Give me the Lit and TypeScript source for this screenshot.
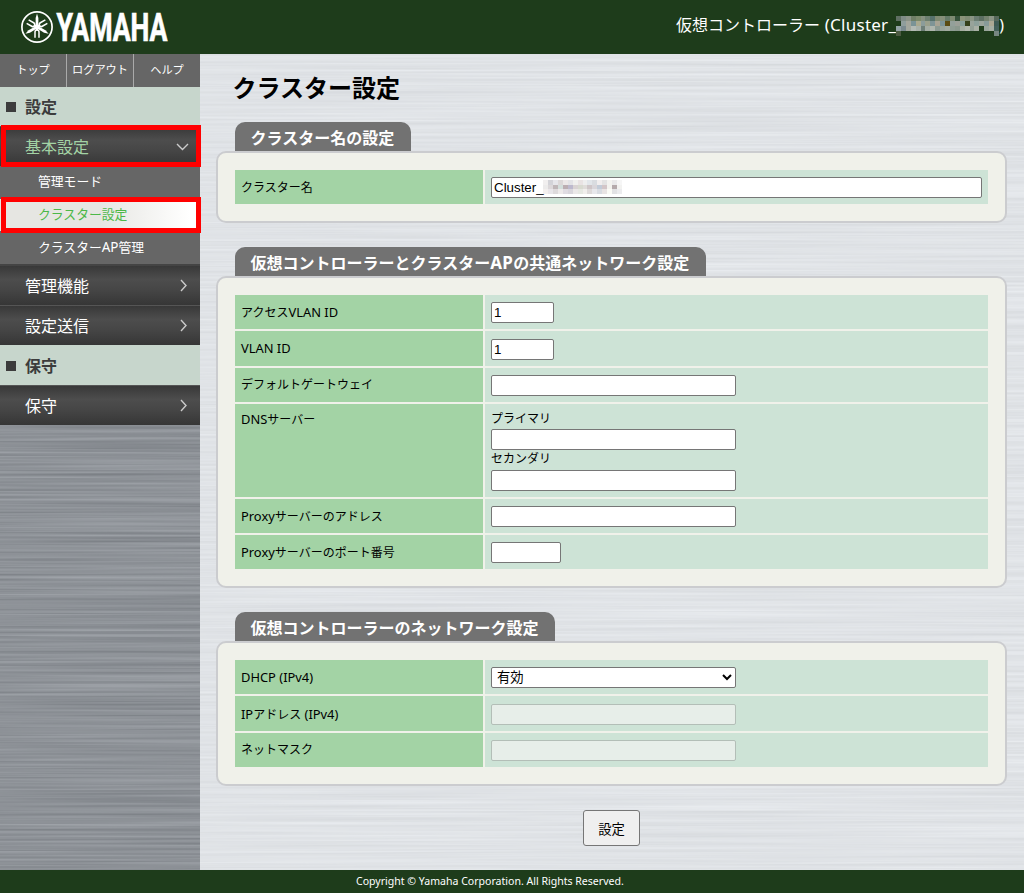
import { LitElement, html, css, svg } from "lit";
import { customElement, property } from "lit/decorators.js";

const HEADER_MOSAIC = [
  "5f6f63 7f8c86 8b9488 6f7f66 7b8a6c 85907f 6c7f70 56716b 7f8a72 858f7a 657a68 7d8a72 35513a 8a9379 7f8b74 8a9585 6b7d72 5c6f62 74826f 8b9485 56685a",
  "1e3c1b 8f9e9c a3a69c 7a9396 a9a98f 8b9c9a 9aa08c 7e9496 a7a394 7d9597 5b4c12 93a09a 9ba098 8aa09a 35401a 98a39a 8da09a 9aa49b 879a98 aca894 3f5b55",
  "93a3a5 7a8a8f a3a89e b3bab4 a7b0a8 6e7f78 a4ada4 afb6ae 8c9a92 9aa59b a2aba0 8f9d94 8b998e a6aea2 b2b8ad 93a096 a9b0a5 1e3c1b 9aa69c a6aea3 43605a",
  "4b5a42 1e3c1b 1e3c1b 1e3c1b 1e3c1b 1e3c1b 1e3c1b 1e3c1b 1e3c1b 1e3c1b 1e3c1b 1e3c1b 1e3c1b 1e3c1b 1e3c1b 1e3c1b 1e3c1b 1e3c1b 1e3c1b 1e3c1b 768680",
];
const FIELD_MOSAIC = [
  "f1efef d3d3d8 e6e6ea dcd8d8 ece8e8 e3e3e6 f0f0ee e9e3e3 eeeeee e2e6ea d9dce0 f1eeee e3e3e3 f3f3f0 e9e9ea f6f6f6",
  "ecebeb dcd8da bfb6b8 d3dedb bcaeb2 bdb9cd d9d3d3 d8dad0 dfdcd9 cfc6c8 d9d6da c3ccd8 d3c6c8 f3f3ef b5aaac f2f2f0",
  "f3efee e9e6ea dedadc eeeaea e0dce2 d9d6dc ebe8e8 e6e8e2 f1eeec dedada e8e8ec d9dce2 e9e4e4 fbfbf6 e2e2e4 ececee",
];

const mosaic = (rows: string[], w: number, h: number) => html`
  <svg width=${w} height=${h} viewBox="0 0 ${rows[0].split(" ").length} ${rows.length}" preserveAspectRatio="none" shape-rendering="crispEdges">
    ${rows.map((r, y) => r.split(" ").map((c, x) => svg`<rect x=${x} y=${y} width="1" height="1" fill=${"#" + c}></rect>`))}
  </svg>`;

// Latin runs are set slightly larger than the kana and kanji around them.
const mixed = (text: string) =>
  text.split(/([A-Za-z( ][A-Za-z0-9() ]*)/).filter(Boolean)
    .map((t) => (/^[A-Za-z( ]/.test(t) ? html`<span class="latin">${t}</span>` : t));

const FONT = css`"Noto Sans", "Noto Sans CJK JP", sans-serif`;

@customElement("brand-logo")
class BrandLogo extends LitElement {
  static styles = css`:host { display: block; } svg { display: block; overflow: visible; }`;
  render() {
    const fork = (a: number) => svg`
      <g transform="rotate(${a})">
        <path d="M-2 -10.8 V-5 Q-2 -3 0 -3 Q2 -3 2 -5 V-10.8" fill="none" stroke="#fff" stroke-width="1.5"></path>
        <path d="M-1.2 -3.4 L-1.4 9 L0 13.4 L1.4 9 L1.2 -3.4 Z" fill="#fff"></path>
      </g>`;
    return html`<svg width="150" height="34" viewBox="0 0 150 34">
      <g transform="translate(17 17)">
        <circle r="15.1" fill="none" stroke="#fff" stroke-width="1.7"></circle>
        ${[180, 60, 300].map(fork)}
      </g>
      <text x="36.5" y="30.8" font-family="Roboto, sans-serif" font-weight="700" font-size="38.2" fill="#fff"
        stroke="#fff" stroke-width="0.7" textLength="111" lengthAdjust="spacingAndGlyphs">YAMAHA</text>
    </svg>`;
  }
}

@customElement("side-menu")
class SideMenu extends LitElement {
  static styles = css`
    :host { display: block; position: relative; font-family: ${FONT}; color: #fff; }
    .tools { display: grid; grid-template-columns: 66px 66px 66px; gap: 1px; background: #aaa; height: 33px; }
    .tools span { background: #666; font-size: 11.2px; line-height: 32px; text-align: center; white-space: nowrap; }
    .heading { height: 40px; background: #c7d6cc; color: #3c3c3c; font-size: 16px; font-weight: 700; line-height: 40px; display: flex; align-items: center; padding-left: 6px; gap: 9px; box-sizing: border-box; padding-top: 1px; }
    .heading.first { height: 39px; line-height: 39px; }
    .square { width: 10px; height: 10px; background: #3c3c3c; }
    .item { height: 40px; box-sizing: border-box; border-top: 1px solid #555; padding: 0 11px 0 25px; display: flex; justify-content: space-between; align-items: center; font-size: 16px; line-height: 38px; background: linear-gradient(#383838, #4d4d4d 34%, #464646 60%, #363636); }
    .item.open { color: #a3d3a5; }
    .item.after { height: 41px; border-top: 2px solid #444; }
    .sub { background: #666; font-size: 12.8px; line-height: 30px; }
    .sub div { height: 33px; padding-left: 38px; }
    .sub .current { height: 32px; background: linear-gradient(90deg, #e6e6e2 0 50%, #fff 95%); color: #4cb848; }
    .sub div:last-child { line-height: 32px; }
    .latin { font-size: 13.5px; }
    .mark { position: absolute; left: 1px; width: 200px; box-sizing: border-box; border: 5px solid #f00; }
    .mark.a { top: 71px; height: 42px; }
    .mark.b { top: 143px; height: 36px; }
  `;
  item(label: string, cls = "") {
    const d = cls === "open" ? "M1 4 L6.5 9.5 L12 4" : "M5 1 L10 6.5 L5 12";
    return html`<div class="item ${cls}"><span>${label}</span>
      <svg width="13" height="13" viewBox="0 0 13 13"><path d=${d} fill="none" stroke="#ccc" stroke-width="1.4"></path></svg></div>`;
  }
  render() {
    return html`
      <div class="tools"><span>トップ</span><span>ログアウト</span><span>ヘルプ</span></div>
      <div class="heading first"><i class="square"></i>設定</div>
      ${this.item("基本設定", "open")}
      <div class="sub"><div>管理モード</div><div class="current">クラスター設定</div><div>${mixed("クラスターAP管理")}</div></div>
      ${this.item("管理機能", "after")}
      ${this.item("設定送信")}
      <div class="heading"><i class="square"></i>保守</div>
      ${this.item("保守")}
      <div class="mark a"></div><div class="mark b"></div>
    `;
  }
}

@customElement("setting-panel")
class SettingPanel extends LitElement {
  @property() heading = "";
  @property({ type: Number }) tab = 0;
  static styles = css`
    :host { display: block; font-family: ${FONT}; }
    .tab { margin-left: 19px; height: 29px; box-sizing: border-box; background: #727272; color: #fff; border-radius: 10px 10px 0 0; font-size: 16px; font-weight: 700; line-height: 32px; padding-left: 15.5px; white-space: nowrap; }
    .latin { font-size: 17px; letter-spacing: 0.4px; }
    .body { box-sizing: border-box; border: 2px solid #cbcccf; border-radius: 10px; background: #f0f1ea; padding: 17px; display: flex; flex-direction: column; gap: 2px; }
  `;
  render() {
    return html`<div class="tab" style="width:${this.tab - 16}px">${mixed(this.heading)}</div>
      <div class="body"><slot></slot></div>`;
  }
}

@customElement("setting-row")
class SettingRow extends LitElement {
  @property() label = "";
  @property({ type: Number }) h = 34;
  @property({ type: Number }) lift = 0;
  @property({ type: Number }) drop = 0;
  static styles = css`
    :host { display: block; font-family: ${FONT}; font-size: 12px; color: #000; }
    .row { display: grid; grid-template-columns: 248px 1fr; gap: 2px; }
    .label { background: #a3d3a5; padding-left: 6px; line-height: 18px; box-sizing: border-box; }
    .latin { font-size: 12.9px; }
    .value { background: #cde3d6; padding: 7px 6px 0; box-sizing: border-box; }
  `;
  render() {
    return html`<div class="row" style="height:${this.h}px">
      <div class="label" style="padding-top:${8 + this.lift}px">${mixed(this.label)}</div>
      <div class="value" style="padding-top:${7 + this.drop}px"><slot></slot></div></div>`;
  }
}

@customElement("app-root")
class AppRoot extends LitElement {
  static styles = css`
    :host { display: block; font-family: ${FONT}; color: #000; }
    .page { width: 1024px; height: 893px; display: grid; grid-template: 54px 816px 23px / 200px 824px; overflow: hidden; }
    header { grid-column: 1 / 3; background: #1e3c1b; display: flex; justify-content: space-between; padding: 10px 20px 0; }
    .who { color: #fff; font-size: 16px; line-height: 30px; display: flex; white-space: pre; }
    .who .latin { font-size: 17px; letter-spacing: 0.25px; }
    .blot { position: relative; width: 103px; }
    .blot svg { position: absolute; left: 0; top: 6px; }
    .side, .main { position: relative; }
    .side { z-index: 1; background: #8d9196; }
    .main { background: #e0e3e7; }
    .grain { position: absolute; inset: 0; width: 100%; height: 100%; }
    .content { position: relative; padding: 16px 17px 0 16px; display: flex; flex-direction: column; }
    h1 { margin: 0 0 16px 16.5px; font-size: 24px; line-height: 36px; font-weight: 700; }
    setting-panel { margin-bottom: 24px; }
    input, select { display: block; box-sizing: border-box; width: 245px; height: 21px; margin: 0; border: 1px solid #767676; border-radius: 2px; padding: 1px 2px; font: 13.333px "Liberation Sans", "Noto Sans CJK JP", sans-serif; color: #000; background: #fff; }
    select { padding: 0 0 0 1px; }
    input:disabled { background: #e7eee9; border-color: #b3beb7; }
    .full { width: 491px; }
    .vlan { width: 63px; }
    .port { width: 70px; }
    .field { position: relative; }
    .field svg { position: absolute; left: 52px; top: 3px; }
    .cap { height: 18px; line-height: 16px; }
    .cap.second { height: 20px; line-height: 18px; }
    button { align-self: center; margin: 0; width: 57px; height: 36px; border: 1px solid #767676; border-radius: 3px; background: #efefef; font: 13.333px "Noto Sans CJK JP", sans-serif; color: #000; padding: 1px 0 0; }
    footer { grid-column: 1 / 3; background: #1e3c1b; color: #fff; font-size: 10.55px; line-height: 23px; padding-left: 356px; white-space: nowrap; }
  `;
  grain(dark: boolean) {
    const amp = dark ? 0.18 : 0.09;
    const tone = dark ? [0.555, 0.572, 0.594] : [0.878, 0.89, 0.904];
    const values = tone.map((t) => `${amp} 0 0 0 ${(t - amp / 2).toFixed(3)}`).join(" ") + " 0 0 0 0 1";
    const id = dark ? "grain-dark" : "grain-light";
    return html`<svg class="grain"><filter id=${id} x="0" y="0" width="100%" height="100%" color-interpolation-filters="sRGB">
      <feTurbulence type="fractalNoise" baseFrequency="0.003 0.4" numOctaves="3" seed=${dark ? 4 : 9}></feTurbulence>
      <feColorMatrix type="matrix" values=${values}></feColorMatrix></filter>
      <rect width="100%" height="100%" filter="url(#${id})"></rect></svg>`;
  }
  render() {
    return html`<div class="page">
      <header>
        <brand-logo></brand-logo>
        <div class="who"><span>仮想コントローラー</span><span class="latin"> (Cluster_</span><span class="blot">${mosaic(HEADER_MOSAIC, 103, 20)}</span>)</div>
      </header>
      <div class="side">${this.grain(true)}<side-menu></side-menu></div>
      <div class="main">${this.grain(false)}
        <div class="content">
          <h1>クラスター設定</h1>
          <setting-panel heading="クラスター名の設定" tab="192">
            <setting-row label="クラスター名" lift="0.5"><div class="field"><input class="full" .value=${"Cluster_"}>${mosaic(FIELD_MOSAIC, 79, 14)}</div></setting-row>
          </setting-panel>
          <setting-panel heading="仮想コントローラーとクラスターAPの共通ネットワーク設定" tab="487">
            <setting-row label="アクセスVLAN ID"><input class="vlan" .value=${"1"}></setting-row>
            <setting-row label="VLAN ID" h="35" drop="1"><input class="vlan" .value=${"1"}></setting-row>
            <setting-row label="デフォルトゲートウェイ"><input></setting-row>
            <setting-row label="DNSサーバー" h="93" lift="-2">
              <div class="cap">プライマリ</div><input>
              <div class="cap second">セカンダリ</div><input>
            </setting-row>
            <setting-row label="Proxyサーバーのアドレス"><input></setting-row>
            <setting-row label="Proxyサーバーのポート番号"><input class="port"></setting-row>
          </setting-panel>
          <setting-panel heading="仮想コントローラーのネットワーク設定" tab="336">
            <setting-row label="DHCP (IPv4)"><select><option>有効</option></select></setting-row>
            <setting-row label="IPアドレス (IPv4)" h="35" lift="1" drop="1"><input disabled></setting-row>
            <setting-row label="ネットマスク"><input disabled></setting-row>
          </setting-panel>
          <button>設定</button>
        </div>
      </div>
      <footer>Copyright © Yamaha Corporation. All Rights Reserved.</footer>
    </div>`;
  }
}
